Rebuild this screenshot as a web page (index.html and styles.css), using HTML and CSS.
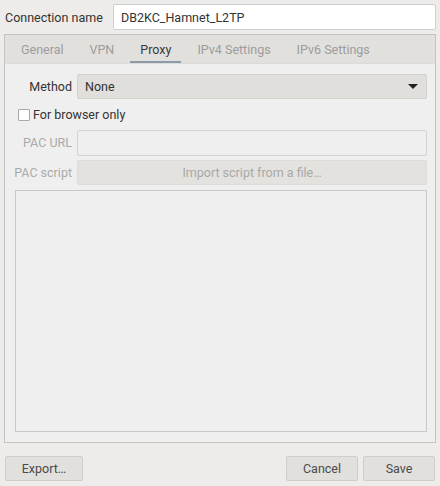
FILE: index.html
```html
<!DOCTYPE html>
<html>
<head>
<meta charset="utf-8">
<link rel="stylesheet" href="styles.css">
</head>
<body>
<div class="dialog">
  <div class="name-row">
    <span class="name-label">Connection name</span>
    <div class="entry name-entry">DB2KC_Hamnet_L2TP</div>
  </div>
  <div class="notebook">
    <div class="tabs">
      <div class="tab">General</div>
      <div class="tab">VPN</div>
      <div class="tab active">Proxy</div>
      <div class="tab">IPv4 Settings</div>
      <div class="tab">IPv6 Settings</div>
    </div>
    <div class="page">
      <div class="label">Method</div>
      <div class="combo"><span>None</span><span class="arrow"></span></div>
      <label class="check-row"><span class="checkbox"></span><span>For browser only</span></label>
      <div class="label dim">PAC URL</div>
      <div class="entry disabled"></div>
      <div class="label dim">PAC script</div>
      <div class="button disabled-btn">Import script from a file…</div>
      <div class="script-area"></div>
    </div>
  </div>
  <div class="actions">
    <div class="button export">Export…</div>
    <div class="spacer"></div>
    <div class="button wide">Cancel</div>
    <div class="button wide">Save</div>
  </div>
</div>
</body>
</html>
```

FILE: styles.css
```css
html, body {
  margin: 0;
  padding: 0;
}
body {
  width: 440px;
  height: 486px;
  background: #edecea;
  font-family: Roboto, "Liberation Sans", sans-serif;
  font-size: 12.5px;
  color: #333333;
  overflow: hidden;
}
.dialog {
  display: flex;
  flex-direction: column;
  height: 486px;
}
.name-row {
  display: flex;
  align-items: center;
  padding: 4px 4px 0 5px;
  height: 26px;
}
.name-label {
  width: 108px;
  flex: none;
  white-space: nowrap;
}
.entry {
  box-sizing: border-box;
  height: 26px;
  background: #ffffff;
  border: 1px solid #cfcfcd;
  border-radius: 2px;
  display: flex;
  align-items: center;
  padding: 0 7px;
}
.name-entry {
  flex: 1;
}
.notebook {
  margin: 4px 4px 0 4px;
  height: 407px;
  border: 1px solid #c4c3c1;
  display: flex;
  flex-direction: column;
  background: #efefef;
}
.tabs {
  height: 29px;
  background: #e2e0dd;
  border-bottom: 1px solid #dcdbd9;
  display: flex;
  gap: 6px;
  padding-left: 6px;
  box-sizing: border-box;
}
.tab {
  padding: 0 10px;
  display: flex;
  align-items: center;
  color: #9c9c9c;
  box-sizing: border-box;
  border-bottom: 2px solid transparent;
  padding-top: 2px;
  white-space: nowrap;
}
.tab.active {
  color: #3a3a3a;
  border-bottom-color: #8d9aa8;
}
.page {
  flex: 1;
  display: grid;
  grid-template-columns: 58px 1fr;
  grid-template-rows: 25px 21px 25px 25px 1fr;
  column-gap: 5px;
  row-gap: 5px;
  padding: 10px 8px 10px 9px;
}
.label {
  display: flex;
  align-items: center;
  justify-content: flex-end;
  white-space: nowrap;
}
.label.dim {
  color: #aaaaaa;
}
.combo {
  box-sizing: border-box;
  background: #e0dfdc;
  border: 1px solid #d3d2cf;
  border-radius: 2px;
  display: flex;
  align-items: center;
  justify-content: space-between;
  padding: 0 8px 0 7px;
}
.arrow {
  width: 0;
  height: 0;
  border-left: 5px solid transparent;
  border-right: 5px solid transparent;
  border-top: 5px solid #222222;
}
.check-row {
  grid-column: 1 / 3;
  display: flex;
  align-items: center;
  gap: 3px;
  padding-left: 4px;
}
.checkbox {
  width: 12px;
  height: 12px;
  box-sizing: border-box;
  background: #ffffff;
  border: 1px solid #a9a9a9;
  border-radius: 1px;
}
.entry.disabled {
  background: #efefef;
  border-color: #d2d2d0;
}
.button {
  box-sizing: border-box;
  height: 25px;
  background: #e1e0dd;
  border: 1px solid #cfcecb;
  border-radius: 2px;
  display: flex;
  align-items: center;
  justify-content: center;
  color: #4a4a4a;
}
.disabled-btn {
  color: #a8a8a8;
  background: #e3e2df;
  border-color: #dddcd9;
}
.script-area {
  grid-column: 1 / 3;
  margin-left: 1px;
  background: #efefef;
  border: 1px solid #c9c9c7;
}
.actions {
  display: flex;
  padding: 13px 5px 0 5px;
  gap: 5px;
}
.spacer {
  flex: 1;
}
.export {
  width: 78px;
}
.wide {
  width: 72px;
}
```
